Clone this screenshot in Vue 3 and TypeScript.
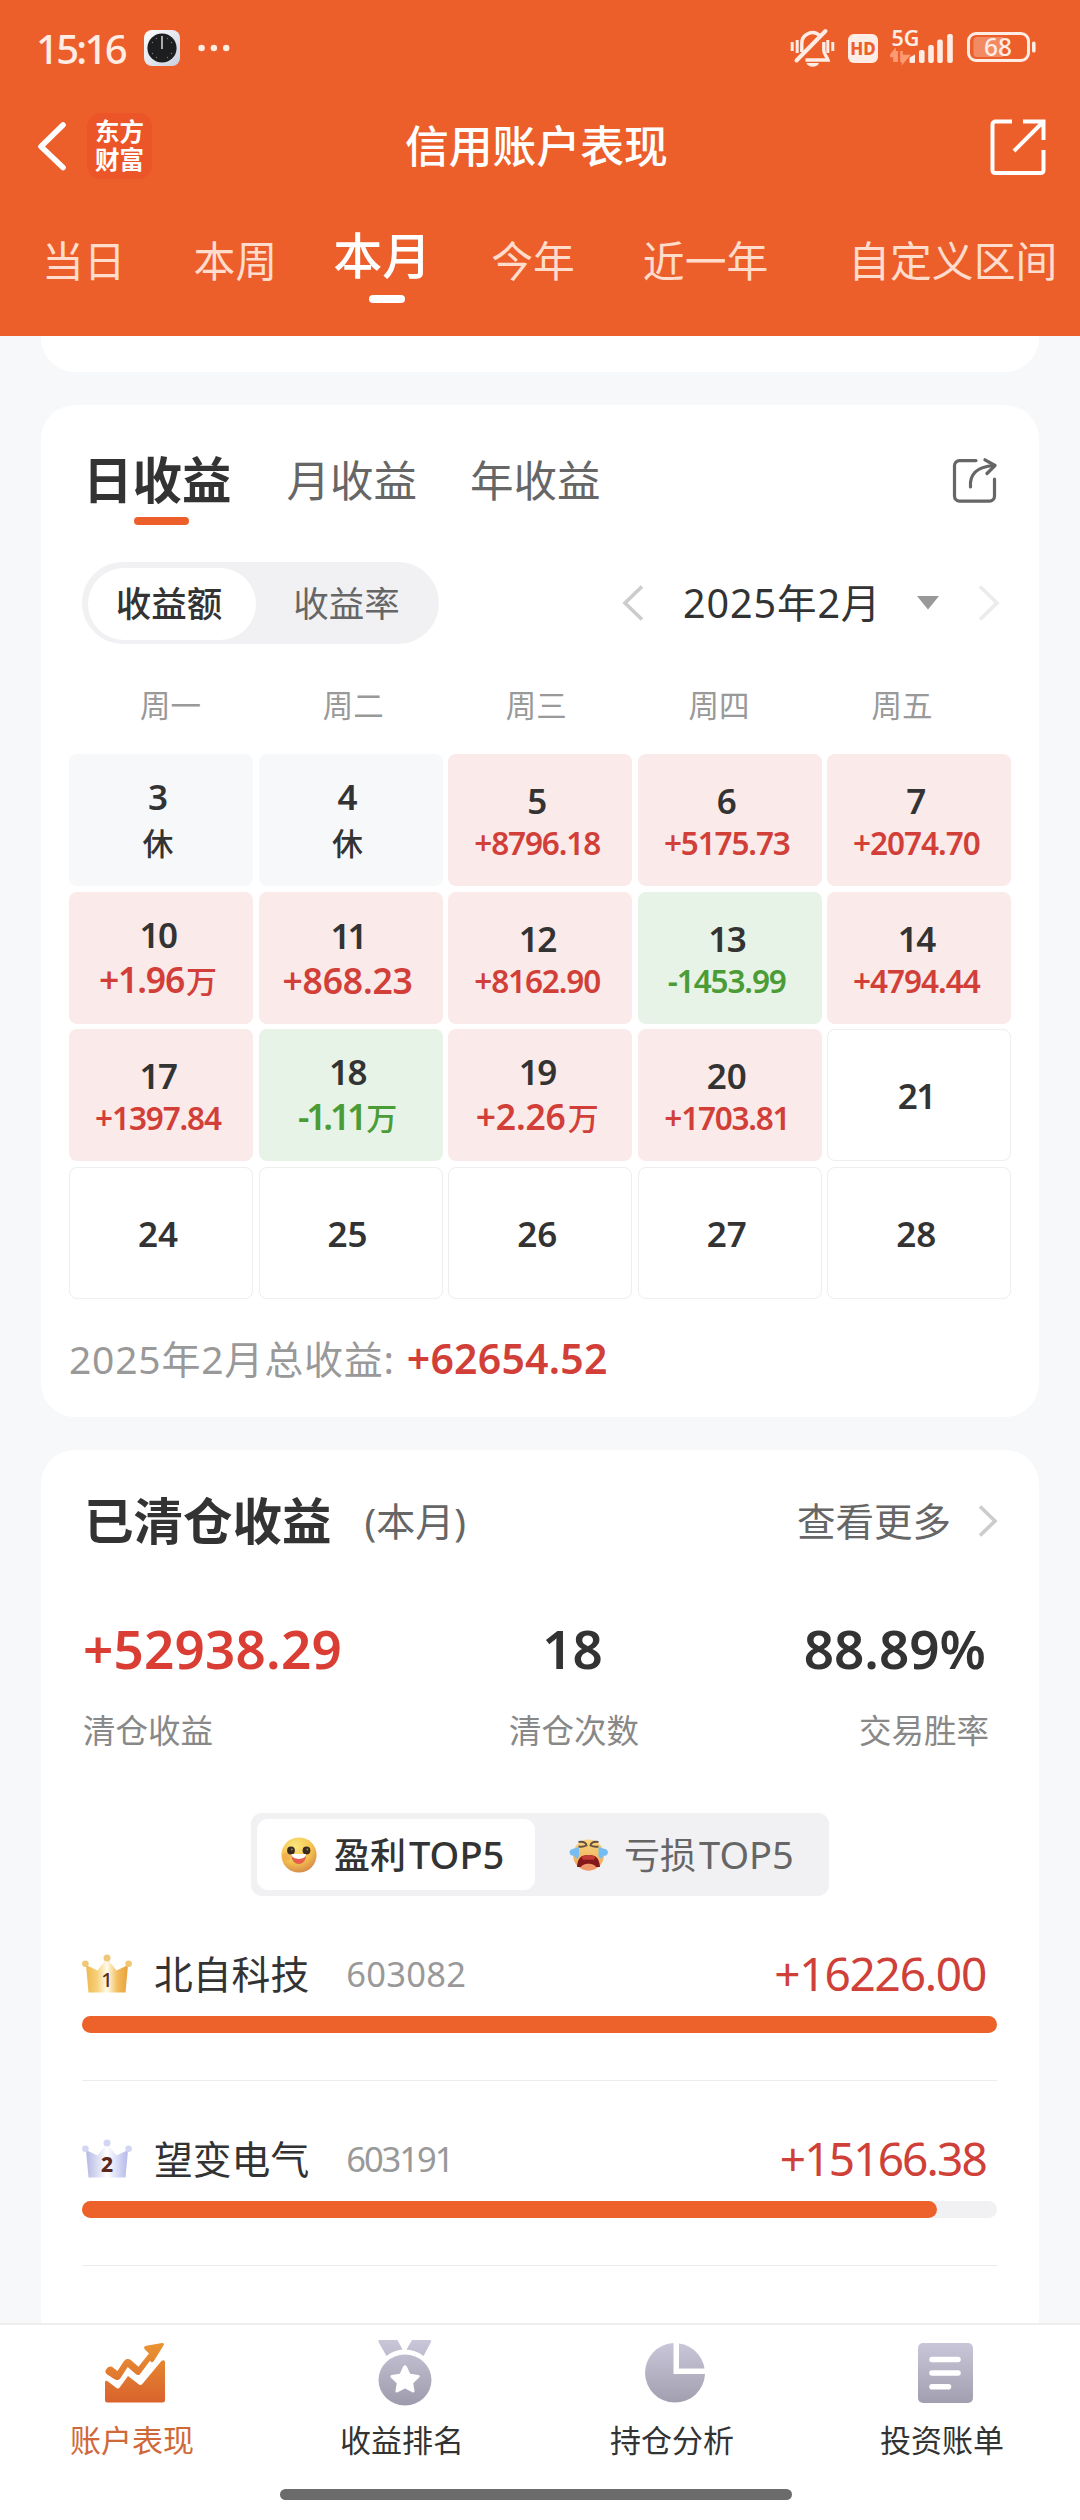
<script setup lang="ts">
type Tone = 'up' | 'down' | 'rest' | 'plain'

interface Day {
  day: number
  tone: Tone
  value?: string
  unit?: string
  compact?: boolean
}

interface Holding {
  rank: number
  name: string
  code: string
  profit: number
}

const ranges: string[] = ['当日', '本周', '本月', '今年', '近一年', '自定义区间']
const weekdays: string[] = ['周一', '周二', '周三', '周四', '周五']

const days: Day[] = [
  { day: 3, tone: 'rest', unit: '休' },
  { day: 4, tone: 'rest', unit: '休' },
  { day: 5, tone: 'up', value: '+8796.18', compact: true },
  { day: 6, tone: 'up', value: '+5175.73', compact: true },
  { day: 7, tone: 'up', value: '+2074.70', compact: true },
  { day: 10, tone: 'up', value: '+1.96', unit: '万' },
  { day: 11, tone: 'up', value: '+868.23' },
  { day: 12, tone: 'up', value: '+8162.90', compact: true },
  { day: 13, tone: 'down', value: '-1453.99', compact: true },
  { day: 14, tone: 'up', value: '+4794.44', compact: true },
  { day: 17, tone: 'up', value: '+1397.84', compact: true },
  { day: 18, tone: 'down', value: '-1.11', unit: '万' },
  { day: 19, tone: 'up', value: '+2.26', unit: '万' },
  { day: 20, tone: 'up', value: '+1703.81', compact: true },
  { day: 21, tone: 'plain' },
  { day: 24, tone: 'plain' },
  { day: 25, tone: 'plain' },
  { day: 26, tone: 'plain' },
  { day: 27, tone: 'plain' },
  { day: 28, tone: 'plain' },
]

const holdings: Holding[] = [
  { rank: 1, name: '北自科技', code: '603082', profit: 16226.0 },
  { rank: 2, name: '望变电气', code: '603191', profit: 15166.38 },
]

const topProfit = holdings[0].profit
const share = (h: Holding): string => `${((h.profit / topProfit) * 100).toFixed(2)}%`

// The digit 1 is narrow, so strings that hold many of them are set tighter.
const tracking = (text: string | number, base = 0, pull = 5): string => {
  const s = String(text)
  const ones = s.split('1').length - 1
  return `${(base - (ones / s.length) * pull).toFixed(2)}px`
}
</script>

<template>
  <div class="screen">
    <header class="header">
      <div class="status">
        <span class="time">15:16</span>
        <svg class="clock" width="36" height="36" viewBox="0 0 36 36">
          <defs>
            <linearGradient id="clockCase" x1="0" y1="0" x2="1" y2="1">
              <stop offset="0" stop-color="#fff" />
              <stop offset="1" stop-color="#c9cfdf" />
            </linearGradient>
          </defs>
          <rect width="36" height="36" rx="8" fill="url(#clockCase)" />
          <circle cx="18" cy="18" r="14.6" fill="#1d1e20" />
          <path d="M18 6v13" stroke="#aaa" stroke-width="2" />
          <g fill="#777">
            <circle cx="12.5" cy="8.5" r=".7" /><circle cx="23.5" cy="8.5" r=".7" />
            <circle cx="8.5" cy="12.5" r=".7" /><circle cx="27.5" cy="12.5" r=".7" />
            <circle cx="8.5" cy="23.5" r=".7" /><circle cx="27.5" cy="23.5" r=".7" />
            <circle cx="12.5" cy="27.5" r=".7" /><circle cx="23.5" cy="27.5" r=".7" />
          </g>
        </svg>
        <svg class="more" width="32" height="8" viewBox="0 0 32 8" fill="#ffece4">
          <circle cx="3.6" cy="4" r="3.2" /><circle cx="15.9" cy="4" r="3.2" /><circle cx="28.2" cy="4" r="3.2" />
        </svg>
        <svg class="bell" width="46" height="40" viewBox="0 0 46 40" fill="none" stroke="#ffece4" stroke-width="3.4">
          <path d="M11.8 24V16a10.6 10.6 0 0 1 18.2-8" />
          <path d="M33.8 14v8.5c0 3.6 3 6 4.2 9.500H15.500" />
          <path d="M6.500 32.500L35.500 3" stroke-width="4" stroke-linecap="round" />
          <path d="M16.500 35h12.500c-1.500 5-11 5-12.500 0z" fill="#ffece4" stroke="none" />
          <path d="M2.200 14v9M7.200 12v13M37.800 12v13M42.800 14v9" stroke-width="3" />
        </svg>
        <span class="hd">HD</span>
        <svg class="signal" width="66" height="52" viewBox="0 -8 66 52">
          <text x="1.500" y="17" class="net" textLength="28" lengthAdjust="spacingAndGlyphs">5G</text>
          <path d="M4.500 33v-8M4.500 22l-4 5h4zM6.600 22v11M11.500 33V22M13 33l5-6h-5z" stroke="#fc9a73" stroke-width="2.600" fill="#fc9a73" />
          <g fill="#ffece4">
            <path d="M19.500 33v-4.500l5.500-3V33a1 1 0 0 1-1 1h-3.500a1 1 0 0 1-1-1z" />
            <rect x="29" y="21" width="5.600" height="13" rx="2" />
            <rect x="38.200" y="16" width="5.600" height="18" rx="2" />
            <rect x="47.200" y="10.500" width="5.600" height="23.500" rx="2" />
            <rect x="57.200" y="5" width="5.600" height="29" rx="2" />
          </g>
        </svg>
        <svg class="battery" width="69" height="42" viewBox="0 -6 69 42">
          <rect x="1.500" y="1.500" width="60" height="27" rx="7.500" fill="none" stroke="#ffece4" stroke-width="3" />
          <path d="M10 5h26v20H10a3.500 3.500 0 0 1-3.500-3.500v-13A3.500 3.500 0 0 1 10 5z" fill="#f28a63" />
          <rect x="65" y="9.500" width="3.600" height="11" rx="1.600" fill="#ffece4" />
          <text x="17" y="24" class="charge" textLength="28" lengthAdjust="spacingAndGlyphs">68</text>
        </svg>
      </div>

      <div class="titlebar">
        <svg class="back" width="30" height="52" viewBox="0 0 30 52" fill="none" stroke="#fff" stroke-width="5.600" stroke-linecap="round" stroke-linejoin="round">
          <path d="M26 5L4 26.500L26 47.500" />
        </svg>
        <div class="brand"><span>东方</span><span>财富</span></div>
        <h1 class="title">信用账户表现</h1>
        <svg class="open" width="56" height="56" viewBox="0 0 56 56" fill="none" stroke="#fff" stroke-width="4">
          <path d="M22 2.500H5.500a3 3 0 0 0-3 3v46a2.500 2.500 0 0 0 2.500 2.500h46a2.500 2.500 0 0 0 2.500-2.500V31" />
          <path d="M33 2.500h20.500V21M53 3L24 32" />
        </svg>
      </div>

      <nav class="ranges">
        <span v-for="r in ranges" :key="r" class="range" :class="{ active: r === '本月' }">{{ r }}</span>
      </nav>
    </header>

    <main class="content">
      <section class="card tail"></section>

      <section class="card calendar">
        <div class="periods">
          <span class="period active">日收益</span>
          <span class="period">月收益</span>
          <span class="period">年收益</span>
          <svg class="export" width="46" height="46" viewBox="0 0 46 46" fill="none" stroke="#666" stroke-width="3.200">
            <path d="M24 2.600H7.500a5 5 0 0 0-5 5v30.500a5 5 0 0 0 5 5h30a5 5 0 0 0 5-5V21" stroke-linecap="round" />
            <path d="M18.500 29C17.500 17 24 8.500 42 7.500" stroke-linecap="round" />
            <path d="M33 1.800L43 7.500L35 15.500" stroke-linecap="round" stroke-linejoin="round" />
          </svg>
        </div>

        <div class="controls">
          <div class="toggle">
            <span class="choice on">收益额</span>
            <span class="choice">收益率</span>
          </div>
          <svg class="prev" width="22" height="36" viewBox="0 0 22 36" fill="none" stroke="#ccc" stroke-width="3.600">
            <path d="M20 1.500L3 18L20 34.500" />
          </svg>
          <span class="month">2025年2月</span>
          <svg class="drop" width="22" height="14" viewBox="0 0 22 14"><path d="M0 0h22L11 13.500z" fill="#999" /></svg>
          <svg class="next" width="22" height="36" viewBox="0 0 22 36" fill="none" stroke="#ebebeb" stroke-width="3.600">
            <path d="M2 1.500L19 18L2 34.500" />
          </svg>
        </div>

        <div class="weekdays">
          <span v-for="w in weekdays" :key="w">{{ w }}</span>
        </div>

        <div class="grid">
          <div v-for="d in days" :key="d.day" class="cell" :class="[d.tone, { compact: d.compact }]">
            <span class="date" :style="{ letterSpacing: tracking(d.day, 0, 3) }">{{ d.day }}</span>
            <span v-if="d.value || d.unit" class="amount"><span v-if="d.value" :style="{ letterSpacing: tracking(d.value, d.compact ? -1 : -0.2, d.compact ? 1 : 5) }">{{ d.value }}</span><i v-if="d.unit" class="unit">{{ d.unit }}</i></span>
          </div>
        </div>

        <p class="total">2025年2月总收益:<b>+62654.52</b></p>
      </section>

      <section class="card closed">
        <div class="heading">
          <h2>已清仓收益</h2>
          <span class="scope">(本月)</span>
          <span class="all">查看更多</span>
          <svg class="go" width="20" height="32" viewBox="0 0 20 32" fill="none" stroke="#ccc" stroke-width="3.600">
            <path d="M2 1.500L17 16L2 30.500" />
          </svg>
        </div>

        <div class="stats">
          <div class="stat"><b class="gain">+52938.29</b><span>清仓收益</span></div>
          <div class="stat mid"><b>18</b><span>清仓次数</span></div>
          <div class="stat end"><b>88.89%</b><span>交易胜率</span></div>
        </div>

        <div class="switch">
          <div class="side on">
            <svg width="36" height="36" viewBox="0 0 36 36">
              <defs>
                <radialGradient id="smile" cx=".4" cy=".25" r=".85">
                  <stop offset="0" stop-color="#fbe67c" />
                  <stop offset=".55" stop-color="#f4c24e" />
                  <stop offset="1" stop-color="#cf7a48" />
                </radialGradient>
              </defs>
              <circle cx="18" cy="18" r="17.600" fill="url(#smile)" />
              <circle cx="5.500" cy="19.500" r="4" fill="#f39a4a" opacity=".5" />
              <circle cx="10" cy="13.500" r="3.900" fill="#3a2a20" /><circle cx="25.500" cy="13.500" r="3.900" fill="#3a2a20" />
              <circle cx="10.800" cy="12.500" r="1" fill="#8d7a6a" /><circle cx="26.300" cy="12.500" r="1" fill="#8d7a6a" />
              <path d="M10.500 18h14.500c0 12-14.500 12-14.500 0z" fill="#e4604c" />
              <path d="M10.500 17h14.500c0 6.500-14.500 6.500-14.500 0z" fill="#fff" />
            </svg>
            <span>盈利<em>TOP5</em></span>
          </div>
          <div class="side">
            <svg width="42" height="34" viewBox="0 0 42 34">
              <defs>
                <linearGradient id="cry" x1="0" y1="0" x2="0" y2="1">
                  <stop offset="0" stop-color="#f8d77a" />
                  <stop offset="1" stop-color="#eea259" />
                </linearGradient>
              </defs>
              <circle cx="20.500" cy="17" r="15.500" fill="url(#cry)" />
              <path d="M10.500 4c5-1 7.500 1 8 3.500-2 1-5 1.500-8 1M30.500 4c-5-1-7.500 1-8 3.500 2 1 5 1.500 8 1" fill="none" stroke="#665044" stroke-width="1.900" />
              <path d="M20.500 17.500c7-1.500 11 3 11.500 11.500H9c.5-8.500 4.500-13 11.500-11.500z" fill="#84171b" />
              <path d="M13.500 18.800c4-1.800 10-1.800 14 0l-1.500 3h-11z" fill="#c43a35" />
              <path d="M13 29.500c1-5 14-5 15 0-3 4-12 4-15 0z" fill="#f0966b" />
              <path d="M11 9L3 11.500c-3.500 3 0 7.500 3.500 6 0 4 4.500 4.500 4.500-1z" fill="#74bdf3" />
              <path d="M30.500 9l8 2.500c3.500 3 0 7.500-3.500 6 0 4-4.500 4.500-4.500-1z" fill="#74bdf3" />
            </svg>
            <span>亏损<em>TOP5</em></span>
          </div>
        </div>

        <ul class="holdings">
          <li v-for="h in holdings" :key="h.rank" class="holding">
            <div class="row">
              <svg width="50" height="40" viewBox="0 0 50 40">
                <defs>
                  <linearGradient id="crown1" x1="0" y1="0" x2="1" y2="0">
                    <stop offset="0" stop-color="#f0b851" />
                    <stop offset=".25" stop-color="#f6cf76" />
                    <stop offset=".5" stop-color="#fffbea" />
                    <stop offset=".75" stop-color="#f3bd5b" />
                    <stop offset="1" stop-color="#e8a03e" />
                  </linearGradient>
                  <linearGradient id="crown2" x1="0" y1="0" x2="1" y2="0">
                    <stop offset="0" stop-color="#b4b8e4" />
                    <stop offset=".3" stop-color="#dfe1f4" />
                    <stop offset=".5" stop-color="#fff" />
                    <stop offset=".8" stop-color="#d0d3f3" />
                    <stop offset="1" stop-color="#b5b9e8" />
                  </linearGradient>
                </defs>
                <path d="M4 11l11.500 5.500L25 4.500l9.500 12L46 11l-2.500 27.500h-37z" :fill="`url(#crown${h.rank})`" />
                <g :fill="h.rank === 1 ? '#efc877' : '#d3d6f2'">
                  <circle cx="3.400" cy="9.700" r="3.300" /><circle cx="25" cy="4" r="3.500" /><circle cx="46.600" cy="9.700" r="3.300" />
                </g>
                <text x="25" y="32.500" text-anchor="middle" class="rank" :class="{ heavy: h.rank === 2 }">{{ h.rank }}</text>
              </svg>
              <span class="name">{{ h.name }}</span>
              <span class="code" :style="{ letterSpacing: tracking(h.code, 0.3, 7) }">{{ h.code }}</span>
              <span class="profit" :style="{ letterSpacing: tracking(h.profit.toFixed(2), -0.6, 5) }">+{{ h.profit.toFixed(2) }}</span>
            </div>
            <div class="track"><div class="fill" :style="{ width: share(h) }"></div></div>
          </li>
        </ul>
      </section>
    </main>

    <footer class="tabbar">
      <svg width="0" height="0" class="defs">
        <defs>
          <linearGradient id="warm" x1="0" y1="0" x2="0" y2="1" gradientUnits="userSpaceOnUse" gradientTransform="scale(1 60)">
            <stop offset="0" stop-color="#ea9433" />
            <stop offset="1" stop-color="#d9622c" />
          </linearGradient>
          <linearGradient id="cool" x1="0" y1="0" x2="0" y2="1" gradientUnits="userSpaceOnUse" gradientTransform="scale(1 66)">
            <stop offset="0" stop-color="#c8c6d8" />
            <stop offset="1" stop-color="#9d9bab" />
          </linearGradient>
        </defs>
      </svg>
      <div class="tabs">
        <div class="tab current">
          <svg width="60" height="66" viewBox="0 -3 60 66" fill="url(#warm)">
            <path d="M1.500 26c2.500-3.200 5-3 7-1l4 3 6.500-10c2-2.600 5-2.600 7-.8l7.500 6.500L44 10.500l-4.500-4.500c-1-2 0-3 2-3.200L57 0c2-.2 2.500 1 1.500 2.500L48.500 18.500c-1.500 1.500-2.500.5-3.500-.8L35.500 30.500c-1.500 2-3.200 2-4.800.5l-8-7-7.500 11.500c-1.800 2-4 2-6 .5L1.500 31c-1.500-1.500-1.500-3.500 0-5z" />
            <path d="M0 39.500c0-2 1.500-2.200 3-1l8.500 6.500c1.500 1 2.500.5 3.500-1l8-11 11 8.500c1.500 1 2.500.5 3.500-.8L56 18.500c2-2 4-1.500 4 1V57a2.500 2.500 0 0 1-2.500 2.500h-55A2.500 2.500 0 0 1 0 57z" />
          </svg>
          <span>账户表现</span>
        </div>
        <div class="tab">
          <svg width="54" height="66" viewBox="0 0 54 66" fill="url(#cool)">
            <path d="M1.500 0h18l5 9.500c-6 .5-11 2.500-16 6.500L.5 2C0 .7.500 0 1.500 0zM34 0h17.500c1.500 0 2 .7 1.500 2l-7.500 14c-5-4-10.500-6-17-6.500z" />
            <path fill-rule="evenodd" d="M27 14.500a26.500 25.500 0 1 1 0 51 26.500 25.500 0 0 1 0-51zM25.200 26.500l-3.400 7.300-8 1.300c-1.800.4-1.900 1.400-.8 2.700l5.700 5.500-1.200 7.500c-.1 1.700.9 2 2.100 1.400L27 48.500l7.400 3.700c1.400.6 2.200.1 2.100-1.400l-1.300-7.500 5.700-5.500c1.300-1.400 1-2.400-.8-2.700l-7.900-1.300-3.400-7.300c-1-1.600-2.600-1.600-3.600 0z" />
          </svg>
          <span>收益排名</span>
        </div>
        <div class="tab">
          <svg width="60" height="66" viewBox="0 -3 60 66" fill="url(#cool)">
            <path d="M28.500 0v31H60A30 29.800 0 1 1 28.500 0z" />
            <path d="M34 .5A30 29.800 0 0 1 59.500 25.500H34z" />
          </svg>
          <span>持仓分析</span>
        </div>
        <div class="tab">
          <svg width="55" height="66" viewBox="0 -3 55 66">
            <rect y="0" width="55" height="60" rx="5" fill="url(#cool)" />
            <path d="M14 16.500h26M14 30h26M14 43.700h16.500" stroke="#fff" stroke-width="5.600" stroke-linecap="round" />
          </svg>
          <span>投资账单</span>
        </div>
      </div>
      <div class="home"></div>
    </footer>
  </div>
</template>

<style>
body {
  margin: 0;
  background: #f7f8fa;
}
</style>

<style scoped>
.screen {
  width: 1080px;
  height: 2520px;
  display: flex;
  flex-direction: column;
  overflow: hidden;
  background: #f7f8fa;
  color: #333;
  font-family: 'Noto Sans', 'Noto Sans CJK SC', sans-serif;
  white-space: nowrap;
}
.screen svg {
  display: block;
  flex: none;
}
h1, h2, p, ul {
  margin: 0;
  padding: 0;
  font-weight: 400;
}
i, em { font-style: normal; }

.header {
  height: 336px;
  flex: none;
  background: #ec5f2b;
  color: #fff;
}
.status {
  height: 96px;
  display: flex;
  align-items: center;
  padding-left: 36px;
}
.time {
  width: 108px;
  font-size: 40px;
  font-weight: 500;
  letter-spacing: -2.700px;
  color: #ffece4;
}
.more { margin-left: 18px; }
.bell { margin-left: 560px; }
.hd {
  margin-left: 12px;
  width: 30px;
  height: 29px;
  line-height: 29px;
  border-radius: 6px;
  background: #ffece4;
  color: #ec5f2b;
  font-size: 17px;
  font-weight: 800;
  text-align: center;
}
.signal { margin-left: 12px; margin-top: -2px; }
.net { font-size: 21.500px; font-weight: 600; fill: #ffece4; }
.battery { margin-left: 11px; margin-top: -2px; }
.charge { font-size: 25px; font-weight: 500; fill: #ffece4; }

.titlebar {
  height: 100px;
  display: flex;
  align-items: center;
  padding-left: 37px;
}
.brand {
  margin-left: 20px;
  width: 65px;
  height: 66px;
  border-radius: 14px;
  background: #ec5527;
  display: flex;
  flex-direction: column;
  align-items: center;
  justify-content: center;
  font-size: 24.500px;
  font-weight: 700;
  line-height: 28px;
}
.title {
  margin-left: 253px;
  width: 585px;
  font-size: 43.800px;
  font-weight: 500;
  line-height: 60px;
}
.open { margin-top: 1px; }

.ranges {
  display: flex;
  align-items: flex-start;
  padding: 35px 0 0 42px;
}
.range {
  font-size: 41.800px;
  line-height: 60px;
  color: #ffdccb;
}
.range:nth-child(2) { margin-left: 68px; }
.range:nth-child(3) { margin-left: 56px; }
.range:nth-child(4) { margin-left: 60px; }
.range:nth-child(5) { margin-left: 68px; }
.range:nth-child(6) { margin-left: 80px; }
.range.active {
  margin-top: -6px;
  display: flex;
  flex-direction: column;
  align-items: center;
  font-size: 49px;
  font-weight: 500;
  color: #fff;
}
.range.active::after {
  content: '';
  width: 36px;
  height: 8px;
  margin: 10px 0 0 10px;
  border-radius: 4px;
  background: #fff;
}

.content {
  height: 1987px;
  flex: none;
  display: flex;
  flex-direction: column;
  gap: 33px;
  padding: 0 41px;
  overflow: hidden;
}
.card {
  flex: none;
  background: #fff;
  border-radius: 34px;
  box-sizing: border-box;
}
.tail { height: 36px; border-radius: 0 0 34px 34px; }

.calendar { height: 1012px; padding: 0 28px; }
.periods {
  height: 157px;
  display: flex;
  align-items: flex-start;
  padding: 45px 0 0 14px;
  box-sizing: border-box;
}
.period {
  margin-left: 55px;
  font-size: 43.500px;
  line-height: 60px;
  color: #666;
}
.period:nth-child(3) { margin-left: 53px; }
.period.active {
  margin-left: 0;
  display: flex;
  flex-direction: column;
  align-items: center;
  font-size: 49.500px;
  color: #333;
  font-weight: 600;
}
.period.active::after {
  content: '';
  width: 55px;
  height: 8px;
  margin: 7px 0 0 8px;
  border-radius: 4px;
  background: #ec5f2b;
}
.export { margin: 8px 0 0 351px; }

.controls {
  height: 82px;
  display: flex;
  align-items: center;
  padding-left: 13px;
}
.toggle {
  width: 357px;
  height: 82px;
  box-sizing: border-box;
  padding: 6px 6px 4px;
  border-radius: 41px;
  background: #f1f1f4;
  display: flex;
}
.choice {
  flex: 1 0 0;
  padding-left: 4px;
  height: 72px;
  line-height: 70px;
  border-radius: 36px;
  text-align: center;
  font-size: 35.500px;
  color: #666;
}
.choice.on {
  flex: 0 0 162px;
  padding: 0 6px 0 0;
  background: #fff;
  color: #333;
  font-weight: 500;
}
.prev { margin-left: 183px; }
.month {
  margin-left: 39px;
  width: 234px;
  font-size: 39.500px;
  line-height: 60px;
  letter-spacing: .9px;
}
.next { margin-left: 39px; }

.weekdays {
  display: flex;
  padding: 41px 0 0 10px;
  height: 110px;
  box-sizing: border-box;
  color: #999;
}
.weekdays span {
  width: 182.900px;
  font-size: 30.500px;
  line-height: 40px;
  text-align: center;
}

.grid {
  display: grid;
  grid-template-columns: repeat(5, 184px);
  grid-auto-rows: 132px;
  gap: 5.700px 5.600px;
}
.cell {
  box-sizing: border-box;
  padding-right: 6px;
  border-radius: 8px;
  display: flex;
  flex-direction: column;
  align-items: center;
  justify-content: center;
  font-weight: 600;
}
.date { font-size: 35px; line-height: 45px; }
.amount { font-size: 35.500px; line-height: 45px; }
.unit { font-size: 31px; margin-left: 2px; font-weight: 500; }
.compact .amount { font-size: 31.500px; line-height: 39px; }
.up { background: #faeaea; }
.down { background: #e7f3e6; }
.rest { background: #f7f8fa; }
.plain { border: 1.500px solid #eee; }
.up .amount { color: #d13f38; }
.down .amount { color: #4b9c36; }
.rest .unit { margin-left: 0; }

.total {
  margin-top: 29px;
  font-size: 39px;
  line-height: 60px;
  letter-spacing: .8px;
  color: #999;
}
.total b {
  margin-left: 12px;
  font-size: 41px;
  font-weight: 600;
  letter-spacing: .2px;
  color: #d13f38;
}

.closed {
  height: 1000px;
  border-radius: 34px 34px 0 0;
  padding: 0 41px;
}
.heading {
  height: 142px;
  display: flex;
  align-items: center;
  padding-left: 2px;
}
h2 { font-size: 49.500px; line-height: 60px; font-weight: 600; }
.scope {
  margin: -4px 0 0 33px;
  width: 438px;
  font-size: 39px;
  color: #666;
}
.all { margin-top: -4px; font-size: 38.500px; color: #666; }
.go { margin-left: 27px; }

.stats {
  display: flex;
  height: 221px;
  padding: 26px 0 0 1px;
  box-sizing: border-box;
}
.stat {
  width: 130px;
  display: flex;
  flex-direction: column;
  align-items: flex-start;
}
.stat b {
  font-size: 53px;
  line-height: 62px;
  font-weight: 600;
}
.stat span {
  margin-top: 21px;
  font-size: 32.500px;
  line-height: 60px;
  color: #888;
}
.stat .gain { color: #d93d33; letter-spacing: .2px; }
.mid { margin-left: 296px; align-items: center; }
.mid b { padding-right: 3px; }
.end { margin-left: 220px; align-items: flex-end; }
.end b { padding-right: 3px; }

.switch {
  margin: 0 auto;
  width: 578px;
  height: 83px;
  box-sizing: border-box;
  padding: 6px;
  display: flex;
  border-radius: 11px;
  background: #f1f1f4;
}
.side {
  flex: 1;
  display: flex;
  align-items: center;
  padding-left: 33px;
  border-radius: 11px;
  font-size: 36px;
  color: #666;
}
.side.on {
  flex: 0 0 254px;
  padding-left: 24px;
  box-sizing: content-box;
  background: #fff;
  color: #333;
  font-weight: 500;
}
.side span { margin: -3px 0 0 14px; }
.side.on span { margin-left: 17px; }
.side em { margin-left: 3px; font-size: 38px; }

.holdings { list-style: none; }
.holding {
  width: 915px;
  height: 185px;
  box-sizing: border-box;
  border-bottom: 1.500px solid #ececec;
}
.row {
  height: 120px;
  box-sizing: border-box;
  padding-top: 36px;
  display: flex;
  align-items: center;
}
.rank { font-size: 20px; font-weight: 500; fill: #5b2a1c; }
.rank.heavy { font-size: 21px; font-weight: 800; }
.name { margin: -4px 0 0 22px; font-size: 38.800px; }
.code {
  margin: -2px 0 0 37px;
  font-size: 34.500px;
  color: #999;
}
.profit {
  margin: -3px 11px 0 auto;
  font-size: 46px;
  line-height: 60px;
  color: #cf4038;
}
.track {
  height: 17px;
  border-radius: 9px;
  background: #f1f1f4;
}
.fill {
  height: 100%;
  border-radius: 9px;
  background: #ed612b;
}

.tabbar {
  flex: 1;
  background: #fff;
  border-top: 2px solid #eee;
}
.defs { position: absolute; }
.tabs {
  display: flex;
  padding-top: 15px;
}
.tab {
  width: 270px;
  display: flex;
  flex-direction: column;
  align-items: center;
}
.tab span {
  margin: 14px 6px 0 0;
  font-size: 31px;
  line-height: 40px;
}
.tab.current span { color: #d0693a; }
.home {
  margin: 29px 0 0 280px;
  width: 512px;
  height: 11px;
  border-radius: 6px;
  background: #6b6b6b;
}
</style>
